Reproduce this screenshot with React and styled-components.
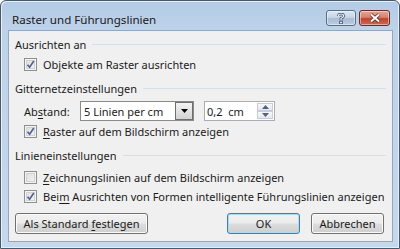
import React from 'react';
import styled, { createGlobalStyle } from 'styled-components';

const Global = createGlobalStyle`
  html, body { margin: 0; padding: 0; background: #ffffff; }
  body { font-family: "Noto Sans", "Open Sans", sans-serif; font-size: 11px; color: #1b1b1b; }
`;

const Window = styled.div`
  box-sizing: border-box;
  width: 400px;
  height: 249px;
  border: 1px solid #4b5866;
  border-radius: 6px 6px 0 0;
  background: linear-gradient(#b3cbe5 0px, #bdd3ea 30px, #c4d8ee 100%);
  display: flex;
  flex-direction: column;
  padding: 0 6px 6px 6px;
  box-shadow: inset 1px 1px 0 #e6eef8, inset -1px -1px 0 #e6eef8;
`;

const TitleBar = styled.div`
  height: 29px;
  display: flex;
  align-items: flex-start;
  justify-content: space-between;
`;

const Title = styled.div`
  padding: 11px 0 0 5px;
  font-size: 11.6px;
  line-height: 16px;
  color: #1a1a1a;
`;

const CaptionButtons = styled.div`
  display: flex;
  gap: 3px;
  padding-top: 9px;
  margin-right: 3px;
`;

const CaptionButton = styled.div`
  box-sizing: border-box;
  width: ${({ $w }) => $w}px;
  height: 16px;
  border: 1px solid ${({ $close }) => ($close ? '#6b2b2b' : '#5d6e84')};
  border-radius: 3px;
  display: flex;
  align-items: center;
  justify-content: center;
  background: ${({ $close }) =>
    $close
      ? 'linear-gradient(#e7a594 0%, #d7826e 45%, #c0432c 55%, #cf6a4f 100%)'
      : 'linear-gradient(#dde7f2 0%, #c7d5e6 45%, #a8bdd6 55%, #b9cde2 100%)'};
  box-shadow: inset 0 0 0 1px rgba(255, 255, 255, 0.45);
`;

const Client = styled.div`
  flex: 1;
  box-sizing: border-box;
  border: 1px solid #93a8c0;
  background: #f0f0f0;
  margin: 0 0 0 1px;
  padding: 4px 6px 0 6px;
  display: flex;
  flex-direction: column;
`;

const GroupHeader = styled.div`
  height: 18px;
  margin-top: ${({ $mt }) => $mt || 0}px;
  display: flex;
  align-items: center;
  gap: 6px;
  &::after {
    content: '';
    flex: 1;
    height: 1px;
    background: #d5dfe5;
  }
`;

const Row = styled.div`
  height: ${({ $h }) => $h || 18}px;
  margin-top: ${({ $mt }) => $mt || 0}px;
  padding-left: ${({ $indent }) => $indent ?? 9}px;
  display: flex;
  align-items: center;
  white-space: nowrap;
`;

const Box = styled.span`
  box-sizing: border-box;
  width: 13px;
  height: 13px;
  border: 1px solid #8e8f8f;
  background: linear-gradient(135deg, #dcdcdc 0%, #f5f5f5 100%);
  box-shadow: inset 0 0 0 1px #f4f4f4, inset 0 0 0 2px #d2d2d2;
  margin-right: 6px;
  display: flex;
  align-items: center;
  justify-content: center;
  flex-shrink: 0;
`;

const U = styled.span`
  text-decoration: underline;
  text-underline-offset: 2px;
`;

const Label = styled.span`
  width: 56px;
`;

const Combo = styled.div`
  box-sizing: border-box;
  width: 114px;
  height: 20px;
  border: 1px solid #8a8a8a;
  background: #fff;
  display: flex;
  align-items: center;
  padding-left: 3px;
`;

const ComboText = styled.span`
  flex: 1;
`;

const ComboButton = styled.div`
  box-sizing: border-box;
  width: 18px;
  height: 18px;
  border: 1px solid #6f6f6f;
  background: linear-gradient(#f3f3f3 0%, #e3e3e3 50%, #d3d3d3 100%);
  display: flex;
  align-items: center;
  justify-content: center;
`;

const Spin = styled.div`
  box-sizing: border-box;
  width: 71px;
  height: 20px;
  margin-left: 10px;
  border: 1px solid #abadb3;
  background: #fff;
  display: flex;
  align-items: center;
  padding-left: 2px;
`;

const SpinText = styled.span`
  flex: 1;
  white-space: pre;
`;

const SpinButtons = styled.div`
  width: 16px;
  height: 16px;
  margin-right: 1px;
  display: flex;
  flex-direction: column;
`;

const SpinButton = styled.div`
  flex: 1;
  box-sizing: border-box;
  border: 1px solid #c8ccd4;
  background: linear-gradient(#f7f8fa, #e4e8ee);
  display: flex;
  align-items: center;
  justify-content: center;
`;

const ButtonRow = styled.div`
  display: flex;
  align-items: center;
  margin-top: 8px;
`;

const Button = styled.div`
  box-sizing: border-box;
  height: 21px;
  width: ${({ $w }) => $w}px;
  margin-left: ${({ $ml }) => $ml || 0}px;
  border: 1px solid ${({ $default }) => ($default ? '#3c7fb1' : '#707070')};
  border-radius: 3px;
  background: linear-gradient(#f2f2f2 0%, #ebebeb 49%, #dddddd 51%, #cfcfcf 100%);
  box-shadow: inset 0 0 0 1px ${({ $default }) => ($default ? '#a6dcf6' : '#fbfbfb')};
  display: flex;
  align-items: center;
  justify-content: center;
  white-space: pre;
`;

const Check = () => (
  <svg width="9" height="9" viewBox="0 0 9 9">
    <path d="M1.5 4.8 L3.6 7.2 L7.8 1" fill="none" stroke="#4a5f97" strokeWidth="1.6" />
  </svg>
);

const CheckBox = ({ checked }) => <Box>{checked && <Check />}</Box>;

const HelpGlyph = () => (
  <svg width="8" height="11" viewBox="0 0 8 11">
    <path d="M1.5 3 Q1.5 1 4 1 Q6.5 1 6.5 3 Q6.5 4.5 4 5.5 L4 7.2" fill="none" stroke="#2f3f55" strokeWidth="2.6" />
    <path d="M1.5 3 Q1.5 1 4 1 Q6.5 1 6.5 3 Q6.5 4.5 4 5.5 L4 7.2" fill="none" stroke="#fff" strokeWidth="1.2" />
    <rect x="2.7" y="8.2" width="2.6" height="2.6" fill="#fff" stroke="#2f3f55" strokeWidth="0.8" />
  </svg>
);

const CloseGlyph = () => (
  <svg width="12" height="10" viewBox="0 0 12 10">
    <path d="M2 1.5 L10 8.5 M10 1.5 L2 8.5" stroke="#5a2a26" strokeWidth="3.6" />
    <path d="M2 1.5 L10 8.5 M10 1.5 L2 8.5" stroke="#fff" strokeWidth="2" />
  </svg>
);

const Caret = ({ up, color = '#000' }) => (
  <svg width="7" height="4" viewBox="0 0 7 4">
    <path d={up ? 'M0 4 L3.5 0 L7 4 Z' : 'M0 0 L7 0 L3.5 4 Z'} fill={color} />
  </svg>
);

export default function App() {
  return (
    <>
      <Global />
      <Window>
        <TitleBar>
          <Title>Raster und Führungslinien</Title>
          <CaptionButtons>
            <CaptionButton $w={30}><HelpGlyph /></CaptionButton>
            <CaptionButton $w={31} $close><CloseGlyph /></CaptionButton>
          </CaptionButtons>
        </TitleBar>
        <Client>
          <GroupHeader>Ausrichten an</GroupHeader>
          <Row $mt={2}>
            <CheckBox checked />
            <span>Ob<U>j</U>ekte am Raster ausrichten</span>
          </Row>
          <GroupHeader $mt={6}>Gitternetzeinstellungen</GroupHeader>
          <Row $h={20} $mt={4}>
            <Label>Ab<U>s</U>tand:</Label>
            <Combo>
              <ComboText>5 Linien per cm</ComboText>
              <ComboButton><Caret /></ComboButton>
            </Combo>
            <Spin>
              <SpinText>0,2  cm</SpinText>
              <SpinButtons>
                <SpinButton><Caret up color="#4d6185" /></SpinButton>
                <SpinButton><Caret color="#4d6185" /></SpinButton>
              </SpinButtons>
            </Spin>
          </Row>
          <Row $mt={1}>
            <CheckBox checked />
            <span><U>R</U>aster auf dem Bildschirm anzeigen</span>
          </Row>
          <GroupHeader $mt={6}>Linieneinstellungen</GroupHeader>
          <Row $mt={4}>
            <CheckBox />
            <span><U>Z</U>eichnungslinien auf dem Bildschirm anzeigen</span>
          </Row>
          <Row $mt={1}>
            <CheckBox checked />
            <span>Bei<U>m</U> Ausrichten von Formen intelligente Führungslinien anzeigen</span>
          </Row>
          <ButtonRow>
            <Button $w={133}><span>Als Standard <U>f</U>estlegen</span></Button>
            <Button $w={73} $ml={79} $default>OK</Button>
            <Button $w={73} $ml={11}>Abbrechen</Button>
          </ButtonRow>
        </Client>
      </Window>
    </>
  );
}
